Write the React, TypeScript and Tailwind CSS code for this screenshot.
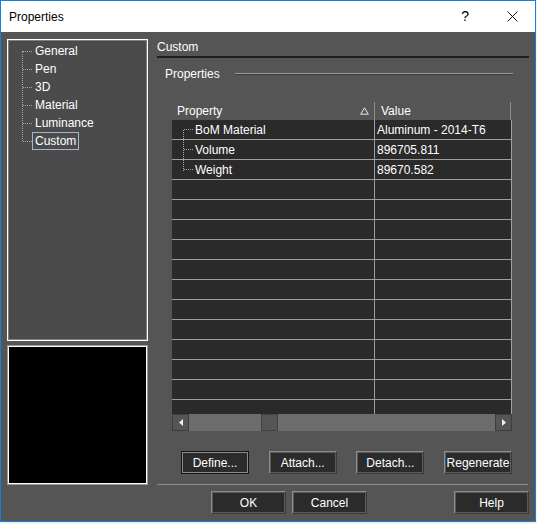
import React from "react";

const treeItems = ["General", "Pen", "3D", "Material", "Luminance", "Custom"];

const rows = [
  { name: "BoM Material", value: "Aluminum - 2014-T6" },
  { name: "Volume", value: "896705.811" },
  { name: "Weight", value: "89670.582" },
];

function DialogButton({
  label,
  isDefault = false,
  className = "",
}: {
  label: string;
  isDefault?: boolean;
  className?: string;
}) {
  return (
    <button
      type="button"
      className={
        "flex h-[23px] items-center justify-center bg-[#2b2b2b] text-[12px] text-white " +
        (isDefault
          ? "border border-[#141414] shadow-[inset_0_0_0_1px_#8a8a8a] "
          : "border border-t-[#8c8c8c] border-l-[#8c8c8c] border-r-[#3a3a3a] border-b-[#3a3a3a] shadow-[inset_0_0_0_1px_#5a5a5a] ") +
        className
      }
    >
      {label}
    </button>
  );
}

function ScrollArrow({ dir }: { dir: "left" | "right" }) {
  return (
    <div className="flex h-[17px] w-[17px] items-center justify-center border border-[#3e3e3e] bg-[#555555]">
      <svg width="4" height="7" viewBox="0 0 4 7" aria-hidden>
        {dir === "left" ? (
          <path d="M4 0v7L0 3.5z" fill="#f0f0f0" />
        ) : (
          <path d="M0 0v7l4-3.5z" fill="#f0f0f0" />
        )}
      </svg>
    </div>
  );
}

export default function App() {
  return (
    <div className="h-[524px] w-[537px] bg-[#eef0f2] font-['Liberation_Sans',Arial,sans-serif] text-[12px]">
      <div className="flex h-[522px] w-[536px] flex-col border border-[#1a7fd4] bg-[#555555]">
        {/* title bar */}
        <div className="flex h-[31px] shrink-0 items-center bg-white text-black">
          <span className="ml-[8px] flex-1 text-[12px]">Properties</span>
          <span className="mr-[38px] text-[14px]">?</span>
          <svg width="11" height="11" viewBox="0 0 11 11" className="mr-[17px]" aria-hidden>
            <path d="M0.5 0.5l10 10M10.5 0.5l-10 10" stroke="#111" strokeWidth="1" />
          </svg>
        </div>

        <div className="flex flex-1 pl-[6px] pt-[7px]">
          {/* left column */}
          <div className="flex w-[141px] flex-col">
            <div className="h-[302px] border border-white bg-[#4b4b4b] shadow-[inset_0_0_0_1px_#808080]">
              <div className="relative ml-[1px] mt-[2px] flex flex-col">
                <div className="absolute bottom-[9px] left-[13px] top-[9px] border-l border-dotted border-[#a8a8a8]" />
                {treeItems.map((item) => (
                  <div key={item} className="flex h-[18px] items-center">
                    <div className="ml-[14px] w-[9px] border-t border-dotted border-[#a8a8a8]" />
                    <span
                      className={
                        "flex h-[18px] items-center border px-[2px] text-white " +
                        (item === "Custom" ? "border-[#a3b8d0]" : "border-transparent")
                      }
                    >
                      {item}
                    </span>
                  </div>
                ))}
              </div>
            </div>
            <div className="mt-[4px] h-[140px] border border-[#9a9a9a] bg-black shadow-[inset_0_0_0_1px_#ffffff]" />
          </div>

          {/* right column */}
          <div className="ml-[9px] flex w-[372px] flex-col">
            <div className="h-[17px] leading-[17px] text-white">Custom</div>
            <div className="h-[2px] bg-[#1e1e1e]" />

            <div className="mt-[8px] flex h-[15px] items-center">
              <span className="ml-[8px] text-white">Properties</span>
              <div className="ml-[15px] mr-[16px] flex-1 border-t border-b border-t-[#9c9c9c] border-b-[#3a3a3a]" />
            </div>

            {/* property grid */}
            <div className="ml-[15px] mt-[21px] flex w-[340px] flex-col">
              <div className="flex h-[18px] items-center">
                <div className="flex h-[18px] w-[203px] items-center border-r border-[#8c8c8c]">
                  <span className="ml-[5px] flex-1 text-white">Property</span>
                  <svg width="9" height="8" viewBox="0 0 9 8" className="mr-[5px]" aria-hidden>
                    <path d="M4.5 0.8L8.3 7.2H0.7z" fill="none" stroke="#e8e8e8" strokeWidth="1" />
                  </svg>
                </div>
                <div className="flex h-[18px] flex-1 items-center border-r border-[#8c8c8c]">
                  <span className="ml-[6px] text-white">Value</span>
                </div>
                <div className="w-[1px]" />
              </div>

              <div className="relative h-[294px] overflow-hidden border-r border-[#a0a0a0] bg-[#2a2a2a]">
                <div className="absolute left-[11px] top-[10px] h-[41px] border-l border-dotted border-[#a8a8a8]" />
                {Array.from({ length: 15 }).map((_, i) => {
                  const row = rows[i];
                  return (
                    <div key={i} className="flex h-[20px] border-b border-[#9e9e9e]">
                      <div className="flex w-[203px] items-center border-r border-[#9e9e9e]">
                        {row && (
                          <>
                            <div className="ml-[12px] w-[9px] border-t border-dotted border-[#a8a8a8]" />
                            <span className="ml-[2px] text-white">{row.name}</span>
                          </>
                        )}
                      </div>
                      <div className="flex flex-1 items-start">
                        {row && <span className="ml-[2px] mt-[1px] text-white">{row.value}</span>}
                      </div>
                    </div>
                  );
                })}
              </div>

              <div className="flex h-[17px] bg-[#6c6c6c]">
                <ScrollArrow dir="left" />
                <div className="ml-[72px] h-[17px] w-[17px] border border-[#434343] bg-[#555555]" />
                <div className="flex-1" />
                <ScrollArrow dir="right" />
              </div>
            </div>

            <div className="ml-[24px] mr-[17px] mt-[20px] flex justify-between">
              <DialogButton label="Define..." isDefault className="w-[68px]" />
              <DialogButton label="Attach..." className="w-[68px]" />
              <DialogButton label="Detach..." className="w-[68px]" />
              <DialogButton label="Regenerate" className="w-[68px]" />
            </div>

            <div className="mr-[1px] mt-[10px] border-t border-[#8c8c8c]" />

            <div className="mt-[6px] flex">
              <DialogButton label="OK" className="ml-[54px] w-[75px]" />
              <DialogButton label="Cancel" className="ml-[6px] w-[75px]" />
              <div className="flex-1" />
              <DialogButton label="Help" className="mr-[0px] w-[75px]" />
            </div>
          </div>
        </div>
      </div>
    </div>
  );
}
